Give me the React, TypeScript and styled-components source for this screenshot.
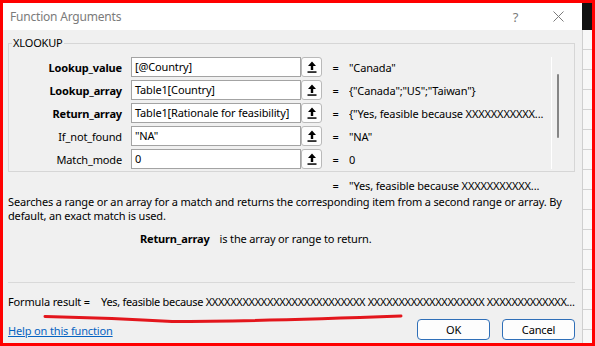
import React from 'react';
import styled, { createGlobalStyle } from 'styled-components';

const GlobalStyle = createGlobalStyle`
  html, body {
    margin: 0;
    padding: 0;
    background: #fff;
  }
`;

const Frame = styled.div`
  position: relative;
  box-sizing: border-box;
  width: 595px;
  height: 346px;
  border: 3px solid #ff0000;
  display: flex;
  overflow: hidden;
  font-family: 'Noto Sans', 'Liberation Sans', sans-serif;
  font-size: 11px;
  letter-spacing: -0.15px;
  color: #000;
`;

const Dialog = styled.div`
  flex: 1;
  display: flex;
  flex-direction: column;
  background: #f0f0f0;
`;

const TitleBar = styled.div`
  height: 27px;
  flex: none;
  display: flex;
  align-items: center;
  padding: 0 2px 0 7px;
  background: #fff;
  color: #7b7b7b;
  font-size: 12px;
  letter-spacing: -0.2px;
`;

const Title = styled.span`
  flex: 1;
`;

const CaptionButton = styled.div`
  width: 43px;
  height: 27px;
  display: flex;
  align-items: center;
  justify-content: center;
  color: #7b7b7b;
  font-size: 13px;
`;

const Body = styled.div`
  flex: 1;
  display: flex;
  flex-direction: column;
  padding: 6px 7px 3px 5px;
`;

const Group = styled.fieldset`
  margin: 0;
  padding: 7px 7px 2px 0;
  border: 1px solid #d6d6d6;
  display: flex;
  min-width: 0;
`;

const Legend = styled.legend`
  margin-left: 3px;
  padding: 0 1px;
  line-height: 14px;
`;

const ArgGrid = styled.div`
  flex: 1;
  display: grid;
  grid-template-columns: 122px 170px 21px 27px 1fr;
  grid-auto-rows: 20px;
  row-gap: 3px;
  align-items: center;
  min-width: 0;
`;

const ArgLabel = styled.div<{ $required?: boolean }>`
  text-align: right;
  padding-right: 9px;
  font-weight: ${(p) => (p.$required ? 700 : 400)};
  white-space: nowrap;
`;

const ArgInput = styled.div`
  box-sizing: border-box;
  height: 20px;
  line-height: 18px;
  padding: 0 3px;
  border: 1px solid #a3a3a3;
  background: #fff;
  white-space: nowrap;
  overflow: hidden;
`;

const RefButton = styled.div`
  box-sizing: border-box;
  height: 20px;
  display: flex;
  align-items: center;
  justify-content: center;
  border: 1px solid #b9b9b9;
  border-radius: 3px;
  background: #fdfdfd;
`;

const Equals = styled.div`
  text-align: center;
`;

const ArgValue = styled.div`
  white-space: nowrap;
  overflow: hidden;
`;

const ScrollTrack = styled.div`
  flex: none;
  width: 15px;
  border-left: 1px solid #fff;
`;

const ScrollThumb = styled.div`
  margin: 17px 0 0 5px;
  width: 2px;
  height: 64px;
  border-radius: 1px;
  background: #868686;
`;

const ResultRow = styled.div`
  display: grid;
  grid-template-columns: 314px 27px 1fr;
  margin-top: 7px;
  line-height: 14px;
`;

const Description = styled.div`
  margin-top: 2px;
  line-height: 14px;
  white-space: nowrap;
`;

const ArgHelp = styled.div`
  display: flex;
  margin-top: 9px;
  padding-left: 132px;
  line-height: 14px;
`;

const ArgHelpName = styled.span`
  font-weight: 700;
  margin-right: 10px;
`;

const Separator = styled.div`
  margin-top: auto;
  border-top: 1px solid #d9d9d9;
`;

const FormulaResult = styled.div`
  display: flex;
  margin-top: 12px;
  line-height: 14px;
  white-space: nowrap;
  overflow: hidden;
`;

const FormulaValue = styled.span`
  margin-left: 11px;
  letter-spacing: -0.31px;
`;

const Footer = styled.div`
  display: flex;
  align-items: center;
  margin-top: 10px;
`;

const HelpLink = styled.a`
  flex: 1;
  color: #0563c1;
  text-decoration: underline;
  line-height: 14px;
  padding-top: 3px;
`;

const DialogButton = styled.button`
  box-sizing: border-box;
  width: 73px;
  height: 21px;
  margin-left: 12px;
  border: 1px solid #2f6fb8;
  border-radius: 4px;
  background: #fdfdfd;
  font: inherit;
  letter-spacing: inherit;
  color: #000;
  padding: 0;
`;

const SheetStrip = styled.div`
  flex: none;
  width: 10px;
  display: flex;
  flex-direction: column;
`;

const SheetHeader = styled.div`
  height: 27px;
  background: #111;
`;

const SheetCells = styled.div`
  flex: 1;
  box-sizing: border-box;
  border-left: 1px solid #cfcfcf;
  background: repeating-linear-gradient(
    to bottom,
    #f7f7f7 0 19px,
    #d2d2d2 19px 20px
  );
`;

const Annotation = styled.svg`
  position: absolute;
  left: -3px;
  top: -3px;
  pointer-events: none;
`;

function UpArrow() {
  return (
    <svg width="10" height="12" viewBox="0 0 10 12">
      <path d="M5 0.5 L9 5 H6.2 V9 H3.8 V5 H1 Z" fill="#000" />
      <rect x="0.5" y="10.3" width="9" height="1.5" fill="#000" />
    </svg>
  );
}

function CloseIcon() {
  return (
    <svg width="11" height="11" viewBox="0 0 11 11">
      <path d="M0.5 0.5 L10.5 10.5 M10.5 0.5 L0.5 10.5" stroke="#7b7b7b" strokeWidth="1" />
    </svg>
  );
}

const args = [
  { name: 'Lookup_value', required: true, input: '[@Country]', value: '"Canada"' },
  { name: 'Lookup_array', required: true, input: 'Table1[Country]', value: '{"Canada";"US";"Taiwan"}' },
  {
    name: 'Return_array',
    required: true,
    input: 'Table1[Rationale for feasibility]',
    value: '{"Yes, feasible because XXXXXXXXXXX...',
  },
  { name: 'If_not_found', required: false, input: '"NA"', value: '"NA"' },
  { name: 'Match_mode', required: false, input: '0', value: '0' },
];

export default function App() {
  return (
    <Frame>
      <GlobalStyle />
      <Dialog>
        <TitleBar>
          <Title>Function Arguments</Title>
          <CaptionButton>?</CaptionButton>
          <CaptionButton>
            <CloseIcon />
          </CaptionButton>
        </TitleBar>
        <Body>
          <Group>
            <Legend>XLOOKUP</Legend>
            <ArgGrid>
              {args.map((a) => (
                <React.Fragment key={a.name}>
                  <ArgLabel $required={a.required}>{a.name}</ArgLabel>
                  <ArgInput>{a.input}</ArgInput>
                  <RefButton>
                    <UpArrow />
                  </RefButton>
                  <Equals>=</Equals>
                  <ArgValue>{a.value}</ArgValue>
                </React.Fragment>
              ))}
            </ArgGrid>
            <ScrollTrack>
              <ScrollThumb />
            </ScrollTrack>
          </Group>
          <ResultRow>
            <span />
            <Equals>=</Equals>
            <ArgValue>"Yes, feasible because XXXXXXXXXXX...</ArgValue>
          </ResultRow>
          <Description>
            Searches a range or an array for a match and returns the corresponding item from a second range or array. By
            <br />
            default, an exact match is used.
          </Description>
          <ArgHelp>
            <ArgHelpName>Return_array</ArgHelpName>
            <span>is the array or range to return.</span>
          </ArgHelp>
          <Separator />
          <FormulaResult>
            <span>Formula result =</span>
            <FormulaValue>
              Yes, feasible because XXXXXXXXXXXXXXXXXXXXXXXXXX XXXXXXXXXXXXXXXXXXX XXXXXXXXXXXXX...
            </FormulaValue>
          </FormulaResult>
          <Footer>
            <HelpLink>Help on this function</HelpLink>
            <DialogButton>OK</DialogButton>
            <DialogButton>Cancel</DialogButton>
          </Footer>
        </Body>
      </Dialog>
      <SheetStrip>
        <SheetHeader />
        <SheetCells />
      </SheetStrip>
      <Annotation width="595" height="346" viewBox="0 0 595 346">
        <path
          d="M45 316.5 Q 115 318 172 321.5 Q 250 321.5 401 316"
          stroke="#e3161c"
          strokeWidth="3"
          strokeLinecap="round"
          fill="none"
        />
      </Annotation>
    </Frame>
  );
}
